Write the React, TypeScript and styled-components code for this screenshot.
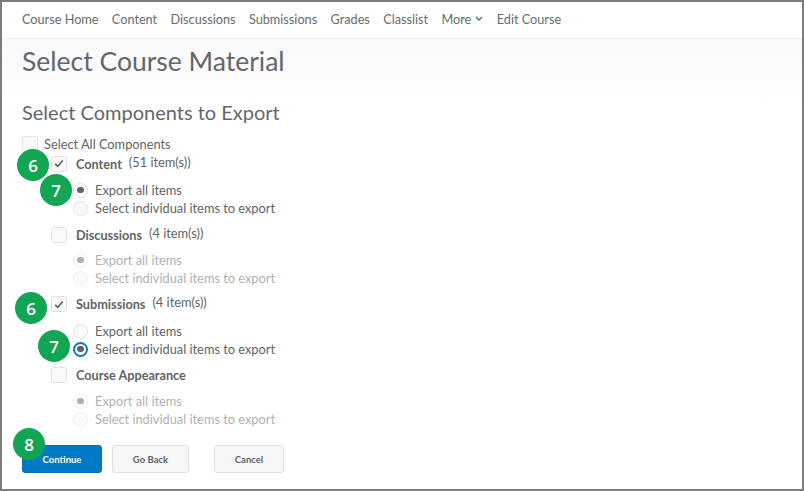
import React from "react";
import styled, { createGlobalStyle } from "styled-components";

const Global = createGlobalStyle`
  html, body { margin: 0; padding: 0; background: #fff; }
  body { font-family: Lato, "Open Sans", sans-serif; color: #565a5c; }
`;

const Frame = styled.div`
  position: relative;
  box-sizing: border-box;
  width: 804px;
  height: 491px;
  border: 2px solid #7d7d7d;
  background: #fff;
  overflow: hidden;
`;

const Nav = styled.nav`
  box-sizing: border-box;
  height: 37px;
  padding: 0 0 3px 20px;
  display: flex;
  align-items: center;
  gap: 13.4px;
  background: #fff;
  border-bottom: 1px solid #eef0f3;
`;

const NavLink = styled.span`
  display: inline-flex;
  align-items: center;
  gap: 4px;
  font-size: 12.7px;
  color: #666b6e;
`;

const Main = styled.main`
  padding: 0 0 0 20px;
  background: linear-gradient(#f8f9fb 0, #fcfcfd 40px, #fff 65px);
`;

const Title = styled.h1`
  margin: 0;
  height: 45px;
  line-height: 45px;
  font-size: 26.5px;
  font-weight: 400;
  color: #63676b;
`;

const Subtitle = styled.h2`
  margin: 14px 0 0;
  height: 28px;
  line-height: 28px;
  font-size: 20px;
  font-weight: 400;
  color: #63676b;
`;

const SelectAllRow = styled.label`
  margin-top: 8px;
  height: 19px;
  display: flex;
  align-items: center;
  gap: 6px;
  font-size: 12.8px;
  color: #5f6366;
`;

const Box = styled.span`
  box-sizing: border-box;
  flex: none;
  width: 16px;
  height: 16px;
  border: 1px solid #dfe2e7;
  border-radius: 3px;
  background: #f8f9fb;
  display: flex;
  align-items: center;
  justify-content: center;
`;

const Component = styled.section`
  padding-left: 29px;
`;

const ComponentRow = styled.div<{ $height: number }>`
  height: ${(p) => p.$height}px;
  display: flex;
  align-items: center;
  gap: 9px;
`;

const ComponentName = styled.strong`
  font-size: 12.7px;
  font-weight: 700;
  color: #5f6366;
`;

const Count = styled.span`
  margin-left: -2px;
  position: relative;
  top: -2px;
  font-size: 12.8px;
  color: #5f6366;
`;

const RadioGroup = styled.div<{ $top: number; $bottom: number; $disabled?: boolean }>`
  padding: ${(p) => p.$top}px 0 ${(p) => p.$bottom}px 22px;
  display: flex;
  flex-direction: column;
  opacity: ${(p) => (p.$disabled ? 0.5 : 1)};
`;

const RadioRow = styled.label`
  height: 18px;
  display: flex;
  align-items: center;
  gap: 7px;
  font-size: 12.8px;
  color: #5f6366;
`;

const Radio = styled.span<{ $focus?: boolean }>`
  box-sizing: border-box;
  flex: none;
  width: 15px;
  height: 15px;
  border-radius: 50%;
  border: ${(p) => (p.$focus ? "2px solid #0a7cc1" : "1px solid #dfe2e7")};
  background: #f8f9fb;
  display: flex;
  align-items: center;
  justify-content: center;
`;

const Dot = styled.span`
  width: 6.5px;
  height: 6.5px;
  border-radius: 50%;
  background: #5f6366;
`;

const Buttons = styled.div`
  margin-top: 17px;
  display: flex;
`;

const Button = styled.button<{ $primary?: boolean; $width: number; $gap?: number }>`
  box-sizing: border-box;
  width: ${(p) => p.$width}px;
  height: 28px;
  margin-right: ${(p) => p.$gap ?? 0}px;
  padding: 0;
  border-radius: 3px;
  border: 1px solid ${(p) => (p.$primary ? "#0a6fae" : "#dfe2e6")};
  background: ${(p) => (p.$primary ? "#007ac4" : "#f6f7f8")};
  color: ${(p) => (p.$primary ? "#fff" : "#5f6366")};
  font-family: Lato, sans-serif;
  font-size: 9.5px;
  font-weight: 700;
`;

const Badge = styled.span<{ $x: number; $y: number }>`
  position: absolute;
  left: ${(p) => p.$x - 18}px;
  top: ${(p) => p.$y - 18}px;
  width: 32px;
  height: 32px;
  border-radius: 50%;
  background: #12a554;
  color: #fff;
  font-family: "Open Sans", sans-serif;
  font-size: 17px;
  font-weight: 600;
  display: flex;
  align-items: center;
  justify-content: center;
`;

const Check = () => (
  <svg width="10" height="9" viewBox="0 0 10 9" fill="none">
    <path d="M1.2 4.8 3.7 7.2 8.8 1.5" stroke="#5f6366" strokeWidth="1.7" />
  </svg>
);

const Chevron = () => (
  <svg width="8" height="5" viewBox="0 0 8 5" fill="none">
    <path d="M1 1 4 4 7 1" stroke="#666b6e" strokeWidth="1.4" />
  </svg>
);

const items = [
  { name: "Content", count: "(51 item(s))", checked: true, sel: 0, rowH: 21, top: 7, bottom: 8 },
  { name: "Discussions", count: "(4 item(s))", checked: false, sel: 0, dis: true, rowH: 19, top: 7, bottom: 8 },
  { name: "Submissions", count: "(4 item(s))", checked: true, sel: 1, focus: true, rowH: 18, top: 9, bottom: 8 },
  { name: "Course Appearance", count: "", checked: false, sel: 0, dis: true, rowH: 18, top: 8, bottom: 0 },
];

const nav = ["Course Home", "Content", "Discussions", "Submissions", "Grades", "Classlist"];
const radios = ["Export all items", "Select individual items to export"];

export default function App() {
  return (
    <>
      <Global />
      <Frame>
        <Nav>
          {nav.map((n) => (
            <NavLink key={n}>{n}</NavLink>
          ))}
          <NavLink>
            More <Chevron />
          </NavLink>
          <NavLink>Edit Course</NavLink>
        </Nav>
        <Main>
          <Title>Select Course Material</Title>
          <Subtitle>Select Components to Export</Subtitle>
          <SelectAllRow>
            <Box />
            Select All Components
          </SelectAllRow>
          {items.map((it) => (
            <Component key={it.name}>
              <ComponentRow $height={it.rowH}>
                <Box>{it.checked && <Check />}</Box>
                <ComponentName>{it.name}</ComponentName>
                {it.count && <Count>{it.count}</Count>}
              </ComponentRow>
              <RadioGroup $top={it.top} $bottom={it.bottom} $disabled={it.dis}>
                {radios.map((r, i) => (
                  <RadioRow key={r}>
                    <Radio $focus={it.focus && i === it.sel}>{i === it.sel && <Dot />}</Radio>
                    {r}
                  </RadioRow>
                ))}
              </RadioGroup>
            </Component>
          ))}
          <Buttons>
            <Button $primary $width={80} $gap={10}>Continue</Button>
            <Button $width={77} $gap={25}>Go Back</Button>
            <Button $width={70}>Cancel</Button>
          </Buttons>
        </Main>
        <Badge $x={33} $y={165}>6</Badge>
        <Badge $x={56} $y={190}>7</Badge>
        <Badge $x={31} $y={308}>6</Badge>
        <Badge $x={54} $y={346}>7</Badge>
        <Badge $x={29} $y={444}>8</Badge>
      </Frame>
    </>
  );
}
